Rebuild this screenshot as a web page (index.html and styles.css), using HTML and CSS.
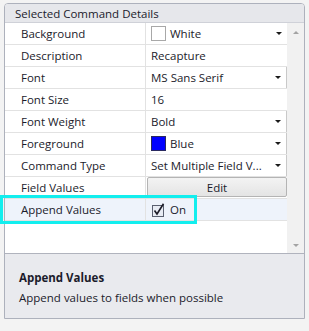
FILE: index.html
```html
<!DOCTYPE html>
<html lang="en">

<head>
    <meta charset="UTF-8">
    <title>Selected Command Details</title>
    <link rel="stylesheet" href="styles.css">
</head>

<body>

    <div class="panel">
        <div class="panel-header">Selected Command Details</div>

        <div class="grid">
            <div class="rows">
                <div class="row">
                    <div class="name">Background</div>
                    <div class="value"><span class="swatch white"></span>White<span class="arrow"></span></div>
                </div>
                <div class="row">
                    <div class="name">Description</div>
                    <div class="value">Recapture</div>
                </div>
                <div class="row">
                    <div class="name">Font</div>
                    <div class="value combo">MS Sans Serif<span class="arrow"></span></div>
                </div>
                <div class="row">
                    <div class="name">Font Size</div>
                    <div class="value">16</div>
                </div>
                <div class="row">
                    <div class="name">Font Weight</div>
                    <div class="value combo">Bold<span class="arrow"></span></div>
                </div>
                <div class="row">
                    <div class="name">Foreground</div>
                    <div class="value combo"><span class="swatch blue"></span>Blue<span class="arrow"></span></div>
                </div>
                <div class="row">
                    <div class="name">Command Type</div>
                    <div class="value combo">Set Multiple Field V...<span class="arrow"></span></div>
                </div>
                <div class="row">
                    <div class="name">Field Values</div>
                    <div class="value button-cell"><button class="edit-btn" type="button">Edit</button></div>
                </div>
                <div class="row selected">
                    <div class="name">Append Values</div>
                    <div class="value">
                        <svg class="check" width="14" height="14" viewBox="0 0 14 14">
                            <rect x="0.5" y="2.5" width="11" height="11" fill="#e8ecf4" stroke="#5a6070" />
                            <path d="M2.5 7.5 L5 11 L11.5 0.8" fill="none" stroke="#1c1c28" stroke-width="1.6" />
                        </svg>
                        On
                    </div>
                    <div class="highlight"></div>
                </div>
            </div><!--rows end-->

            <div class="scrollbar">
                <span class="sb-up"></span>
                <span class="sb-down"></span>
            </div>
        </div><!--grid end-->

        <div class="desc">
            <div class="desc-title">Append Values</div>
            <div class="desc-text">Append values to fields when possible</div>
        </div>
    </div><!--panel end-->

</body>

</html>
```

FILE: styles.css
```css
* {
    box-sizing: border-box;
}

body {
    margin: 0;
    background-color: #f3f3f3;
    font-family: 'Open Sans', sans-serif;
    font-size: 11.5px;
    color: #1b1b2b;
}

.panel {
    margin: 3px 0 0 4px;
    width: 301px;
    height: 316px;
    border: 1px solid #adb1bc;
    border-radius: 4px 4px 0 0;
    background-color: #fff;
    display: flex;
    flex-direction: column;
}

.panel-header {
    height: 19px;
    line-height: 19px;
    padding-left: 10px;
    background-color: #e6e7eb;
    border-bottom: 1px solid #cfd1d8;
    border-radius: 3px 3px 0 0;
}

.grid {
    display: flex;
    height: 230px;
}

.rows {
    flex: 1;
}

.row {
    display: flex;
    height: 22px;
    border-bottom: 1px solid #e2e2e2;
    position: relative;
}

.name {
    width: 141px;
    padding-left: 16px;
    line-height: 21px;
    border-right: 1px solid #e2e2e2;
    white-space: nowrap;
}

.value {
    flex: 1;
    display: flex;
    align-items: center;
    padding-left: 5px;
    position: relative;
    white-space: nowrap;
}

.combo {
    border-right: 1px solid #c9c9c9;
}

.arrow {
    position: absolute;
    right: 5px;
    top: 9px;
    width: 0;
    height: 0;
    border-left: 3px solid transparent;
    border-right: 3px solid transparent;
    border-top: 3px solid #1b1b1b;
}

.swatch {
    width: 15px;
    height: 15px;
    margin-right: 4px;
    border: 1px solid #a8a8a8;
}

.swatch.white {
    background-color: #fff;
}

.swatch.blue {
    background-color: #0000ff;
    border-color: #2a2a60;
}

.button-cell {
    padding: 0 0 1px 1px;
    align-items: stretch;
}

.edit-btn {
    flex: 1;
    font-family: 'Open Sans', sans-serif;
    font-size: 11.5px;
    color: #1b1b2b;
    border: 1px solid #b4b4b4;
    border-radius: 2px;
    background: linear-gradient(#f3f3f3, #e4e4e4);
    padding: 0;
}

.selected {
    background-color: #eef3fb;
}

.check {
    margin: 0 4px 0 1px;
}

.highlight {
    position: absolute;
    left: -5px;
    top: -4px;
    width: 197px;
    height: 29px;
    border: 3px solid #12eeee;
}

.scrollbar {
    width: 17px;
    background-color: #f1f1f1;
    position: relative;
}

.sb-up,
.sb-down {
    position: absolute;
    left: 6px;
    width: 0;
    height: 0;
    border-left: 3px solid transparent;
    border-right: 3px solid transparent;
}

.sb-up {
    top: 8px;
    border-bottom: 3px solid #a3a3a3;
}

.sb-down {
    top: 221px;
    border-top: 3px solid #a3a3a3;
}

.desc {
    flex: 1;
    border-top: 1px solid #b0b3bd;
    background-color: #e9eaee;
    padding: 16px 0 0 14px;
    line-height: 16px;
}

.desc-title {
    font-weight: bold;
}

.desc-text {
    margin-top: 4px;
}
```
